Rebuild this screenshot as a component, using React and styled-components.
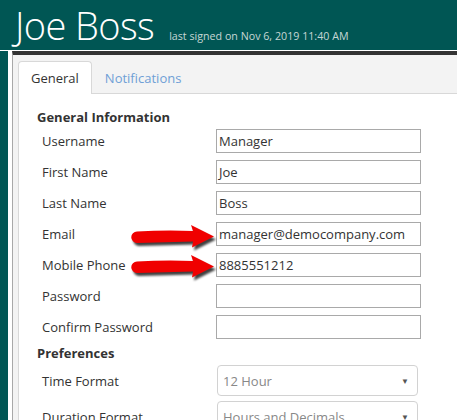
import React from 'react';
import styled, { createGlobalStyle } from 'styled-components';

const GlobalStyle = createGlobalStyle`
  html, body {
    margin: 0;
    padding: 0;
    background: #fff;
    overflow: hidden;
  }
  body {
    font-family: "Open Sans", "Noto Sans", sans-serif;
    color: #333;
  }
`;

const StyledApp = styled.div`
  position: relative;
  width: 457px;
  height: 420px;
  display: flex;
  flex-direction: column;
`;

const StyledHeader = styled.header`
  background-color: #005654;
  height: 50px;
  padding-left: 15px;
  display: flex;
  align-items: baseline;
  flex-shrink: 0;
  box-sizing: border-box;
`;

const StyledTitle = styled.h1`
  margin: 0;
  font-size: 38px;
  font-weight: 300;
  color: #fff;
  line-height: 50px;
  letter-spacing: -0.6px;
`;

const StyledSubTitle = styled.span`
  font-size: 10.7px;
  color: #c6d6d5;
  margin-left: 15px;
`;

const StyledBody = styled.div`
  flex: 1;
  display: flex;
  margin-top: 1px;
`;

const StyledSidebar = styled.div`
  width: 8px;
  background-color: #005654;
  margin-right: 4px;
`;

const StyledPanel = styled.div`
  flex: 1;
  border-top: 4px solid #333;
  border-left: 1px solid #a8a8a8;
  background-color: #f3f3f3;
  padding: 5px 0 0 5px;
  display: flex;
  flex-direction: column;
`;

const StyledTabs = styled.div`
  display: flex;
  align-items: flex-end;
  height: 33px;
`;

const StyledTab = styled.div`
  height: 33px;
  box-sizing: border-box;
  padding: 0 12px;
  display: flex;
  align-items: center;
  font-size: 13px;
  color: ${props => (props.active ? '#333' : '#6f9fd6')};
  background-color: ${props => (props.active ? '#fff' : 'transparent')};
  border: 1px solid ${props => (props.active ? '#d8d8d8' : 'transparent')};
  border-bottom: none;
  border-radius: 4px 4px 0 0;
  margin-bottom: -1px;
  position: relative;
`;

const StyledContent = styled.div`
  flex: 1;
  background-color: #fff;
  border-top: 1px solid #d8d8d8;
  border-left: 1px solid #d8d8d8;
  padding: 14px 0 0 18px;
`;

const StyledSection = styled.div`
  font-size: 13px;
  font-weight: bold;
  line-height: 18px;
  color: #333;
  margin-bottom: 3px;
`;

const StyledFields = styled.div`
  display: flex;
  flex-direction: column;
  gap: ${props => props.gap}px;
  margin-bottom: 5px;
`;

const StyledRow = styled.div`
  display: flex;
  align-items: center;
  height: ${props => props.height}px;
`;

const StyledLabel = styled.label`
  width: 174px;
  padding-left: 5px;
  font-size: 13px;
  color: #333;
`;

const StyledInput = styled.div`
  width: 205px;
  height: 24px;
  box-sizing: border-box;
  border: 1px solid #a9a9a9;
  font-size: 13px;
  line-height: 22px;
  padding-left: 2px;
  color: #333;
`;

const StyledSelect = styled.div`
  width: 201px;
  height: 31px;
  margin-left: 1px;
  box-sizing: border-box;
  border: 1px solid #d2d2d2;
  border-radius: 4px;
  display: flex;
  align-items: center;
  justify-content: space-between;
  padding: 0 8px 0 5px;
  font-size: 13px;
  color: #888;
`;

const StyledCaret = styled.span`
  font-size: 8px;
  color: #555;
`;

const StyledArrow = styled.svg`
  position: absolute;
  left: 131px;
  top: ${props => props.top}px;
  filter: drop-shadow(2px 3px 1px rgba(0, 0, 0, 0.75));
`;

const generalFields = [
  { label: 'Username', value: 'Manager' },
  { label: 'First Name', value: 'Joe' },
  { label: 'Last Name', value: 'Boss' },
  { label: 'Email', value: 'manager@democompany.com' },
  { label: 'Mobile Phone', value: '8885551212' },
  { label: 'Password', value: '' },
  { label: 'Confirm Password', value: '' },
];

const preferenceFields = [
  { label: 'Time Format', value: '12 Hour' },
  { label: 'Duration Format', value: 'Hours and Decimals' },
];

const RedArrow = ({ top }) => (
  <StyledArrow top={top} width="88" height="28" viewBox="0 0 88 28">
    <path
      d="M6,7.5 Q34,6 62,7 L60,1 L83,12.5 L61,23.5 L62,17.5 Q34,18 6,19 A5.7,5.7 0 0 1 6,7.5 Z"
      fill="#f00000"
    />
  </StyledArrow>
);

const App = () => {
  return (
    <StyledApp>
      <GlobalStyle />
      <StyledHeader>
        <StyledTitle>Joe Boss</StyledTitle>
        <StyledSubTitle>last signed on Nov 6, 2019 11:40 AM</StyledSubTitle>
      </StyledHeader>
      <StyledBody>
        <StyledSidebar />
        <StyledPanel>
          <StyledTabs>
            <StyledTab active>General</StyledTab>
            <StyledTab>Notifications</StyledTab>
          </StyledTabs>
          <StyledContent>
            <StyledSection>General Information</StyledSection>
            <StyledFields gap={7}>
              {generalFields.map(field => (
                <StyledRow key={field.label} height={24}>
                  <StyledLabel>{field.label}</StyledLabel>
                  <StyledInput>{field.value}</StyledInput>
                </StyledRow>
              ))}
            </StyledFields>
            <StyledSection>Preferences</StyledSection>
            <StyledFields gap={5}>
              {preferenceFields.map(field => (
                <StyledRow key={field.label} height={31}>
                  <StyledLabel>{field.label}</StyledLabel>
                  <StyledSelect>
                    {field.value}
                    <StyledCaret>▼</StyledCaret>
                  </StyledSelect>
                </StyledRow>
              ))}
            </StyledFields>
          </StyledContent>
        </StyledPanel>
      </StyledBody>
      <RedArrow top={224} />
      <RedArrow top={254} />
    </StyledApp>
  );
};

export default App;
